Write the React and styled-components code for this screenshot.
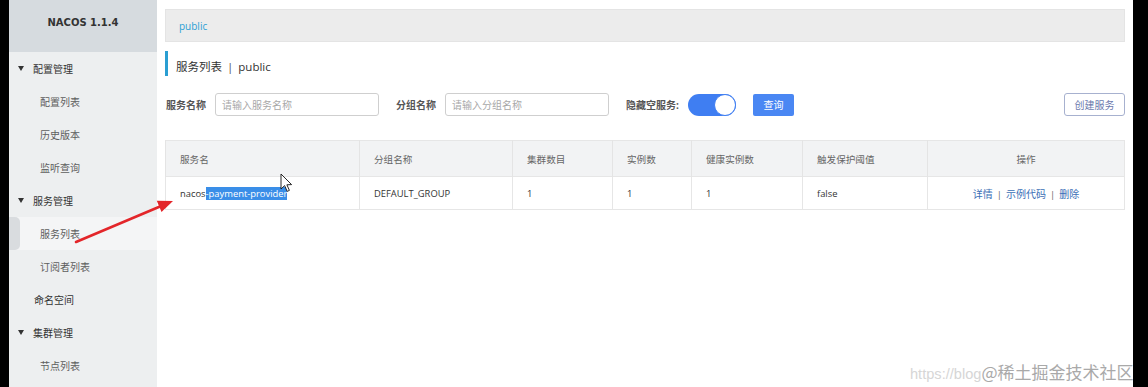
import React from 'react'
import styled, { createGlobalStyle } from 'styled-components'

const GlobalStyle = createGlobalStyle`
  html, body {
    margin: 0;
    padding: 0;
    background: #000;
  }
  body {
    font-family: "Open Sans", "Noto Sans CJK SC", sans-serif;
    font-size: 10px;
    color: #333;
  }
`

const navigation = [
  { id: 'config', name: '配置管理', group: true },
  { id: 'config-list', name: '配置列表' },
  { id: 'history', name: '历史版本' },
  { id: 'listener', name: '监听查询' },
  { id: 'service', name: '服务管理', group: true },
  { id: 'service-list', name: '服务列表', active: true },
  { id: 'subscriber', name: '订阅者列表' },
  { id: 'namespace', name: '命名空间', top: true },
  { id: 'cluster', name: '集群管理', group: true },
  { id: 'nodes', name: '节点列表' },
]

const columns = [
  { title: '服务名', width: 194 },
  { title: '分组名称', width: 153 },
  { title: '集群数目', width: 100 },
  { title: '实例数', width: 79 },
  { title: '健康实例数', width: 111 },
  { title: '触发保护阈值', width: 125 },
  { title: '操作', width: 197, center: true },
]

export default function App() {
  return (
    <>
      <GlobalStyle />
      <Frame>
        <Screen>
          <Sidebar>
            <Brand>NACOS 1.1.4</Brand>
            {navigation.map(({ id, name, group, active, top }) => (
              <NavItem key={id} $group={group} $top={top} $active={active}>
                {group && <Caret />}
                {name}
              </NavItem>
            ))}
          </Sidebar>

          <Main>
            <Breadcrumb>public</Breadcrumb>
            <Title>服务列表 <Sep>|</Sep> public</Title>

            <SearchRow>
              <Label $width={49}>服务名称</Label>
              <Input placeholder="请输入服务名称" />
              <Label $width={49} $gap>分组名称</Label>
              <Input placeholder="请输入分组名称" />
              <Label $width={62} $gap>隐藏空服务:</Label>
              <Switch>
                <Knob />
              </Switch>
              <QueryButton>查询</QueryButton>
              <Spacer />
              <CreateButton>创建服务</CreateButton>
            </SearchRow>

            <Table>
              <colgroup>
                {columns.map(c => <col key={c.title} style={{ width: c.width }} />)}
              </colgroup>
              <thead>
                <tr>
                  {columns.map(c => <Th key={c.title} $center={c.center}>{c.title}</Th>)}
                </tr>
              </thead>
              <tbody>
                <tr>
                  <Td>nacos<Selected>-payment-provider</Selected></Td>
                  <Td>DEFAULT_GROUP</Td>
                  <Td>1</Td>
                  <Td>1</Td>
                  <Td>1</Td>
                  <Td>false</Td>
                  <Td $center>
                    <Action>详情</Action>
                    <Pipe>|</Pipe>
                    <Action>示例代码</Action>
                    <Pipe>|</Pipe>
                    <Action>删除</Action>
                  </Td>
                </tr>
              </tbody>
            </Table>
          </Main>

          <Overlay width="1124" height="387" viewBox="0 0 1124 387">
            <line x1="67" y1="242" x2="151" y2="206.5" stroke="#e3262a" strokeWidth="2.6" strokeLinecap="round" />
            <polygon points="164,201 152.5,212 147.8,200.8" fill="#e3262a" />
            <path
              d="M272 174 L272 189 L275.6 185.6 L278.2 191.4 L280.4 190.4 L277.9 184.8 L282.6 184.6 Z"
              fill="#fff"
              stroke="#111"
              strokeWidth="0.9"
              strokeLinejoin="round"
            />
          </Overlay>

          <Watermark>
            <Faint>https://blog</Faint>@稀土掘金技术社区
          </Watermark>
        </Screen>
      </Frame>
    </>
  )
}

const Frame = styled.div`
  width: 1148px;
  height: 387px;
  background: #000;
  display: flex;
  padding-left: 9px;
  box-sizing: border-box;
  overflow: hidden;
`

const Screen = styled.div`
  position: relative;
  display: flex;
  width: 1124px;
  height: 387px;
  flex: none;
  overflow: hidden;
  background: #fff;
`

const Sidebar = styled.nav`
  width: 148px;
  flex: none;
  background: #edeff0;
  display: flex;
  flex-direction: column;
`

const Brand = styled.div`
  height: 52px;
  background: #d6dbdf;
  display: flex;
  align-items: center;
  justify-content: center;
  padding-bottom: 8px;
  box-sizing: border-box;
  font-family: "DejaVu Sans", sans-serif;
  font-weight: bold;
  font-size: 10px;
  color: #333;
`

const NavItem = styled.div`
  height: 33px;
  display: flex;
  align-items: center;
  box-sizing: border-box;
  padding-left: ${p => (p.$group ? 9 : p.$top ? 25 : p.$active ? 0 : 31)}px;
  font-size: 10px;
  color: ${p => (p.$group || p.$top ? '#333' : '#5e5e5e')};
  background: ${p => (p.$active ? '#f4f5f6' : 'transparent')};

  &::before {
    content: '';
    display: ${p => (p.$active ? 'block' : 'none')};
    width: 11px;
    align-self: stretch;
    margin-right: 20px;
    background: #d9dcdf;
    border-radius: 0 5px 5px 0;
  }
`

const Caret = styled.span`
  width: 0;
  height: 0;
  border-left: 3.5px solid transparent;
  border-right: 3.5px solid transparent;
  border-top: 5px solid #333;
  margin-right: 9px;
`

const Main = styled.main`
  flex: 1;
  display: flex;
  flex-direction: column;
  padding: 9px 9px 0 8px;
  background: #fff;
`

const Breadcrumb = styled.div`
  height: 33px;
  display: flex;
  align-items: center;
  padding-left: 13px;
  background: #ececec;
  border: 1px solid #e4e4e4;
  box-sizing: border-box;
  color: #2ba0d4;
  font-size: 10px;
`

const Title = styled.h1`
  margin: 9px 0 0;
  height: 25px;
  box-sizing: border-box;
  display: flex;
  align-items: flex-end;
  padding-bottom: 1px;
  border-left: 3px solid #2a9ed2;
  padding-left: 8px;
  font-weight: normal;
  font-size: 11.5px;
  line-height: 16px;
  color: #333;
  white-space: pre;
`

const Sep = styled.span`
  color: #555;
  margin: 0 2px;
`

const SearchRow = styled.div`
  margin-top: 17px;
  display: flex;
  align-items: center;
  height: 23px;
  padding-left: 1px;
`

const Label = styled.span`
  flex: none;
  width: ${p => p.$width}px;
  font-weight: bold;
  color: #555;
  font-size: 10px;
  white-space: nowrap;
  margin-left: ${p => (p.$gap ? 17 : 0)}px;
`

const Input = styled.input`
  width: 164px;
  height: 23px;
  box-sizing: border-box;
  border: 1px solid #cfcfcf;
  border-radius: 3px;
  padding: 0 6px;
  font-family: "Open Sans", "Noto Sans CJK SC", sans-serif;
  font-size: 10px;
  outline: none;

  &::placeholder {
    color: #a8a8a8;
  }
`

const Switch = styled.div`
  width: 48px;
  height: 22px;
  border-radius: 11px;
  background: #3f7ef2;
  display: flex;
  justify-content: flex-end;
  align-items: center;
`

const Knob = styled.div`
  width: 20px;
  height: 20px;
  border-radius: 50%;
  background: #fff;
  border: 1px solid #3f7ef2;
`

const QueryButton = styled.button`
  margin-left: 17px;
  width: 41px;
  height: 22px;
  border: none;
  border-radius: 2px;
  background: #4a87f3;
  color: #fff;
  font-family: "Open Sans", "Noto Sans CJK SC", sans-serif;
  font-size: 10px;
  padding: 0;
`

const Spacer = styled.div`
  flex: 1;
`

const CreateButton = styled.button`
  width: 61px;
  height: 23px;
  border: 1px solid #a7b1cf;
  border-radius: 3px;
  background: #fff;
  color: #6a79ad;
  font-family: "Open Sans", "Noto Sans CJK SC", sans-serif;
  font-size: 10px;
  padding: 0;
`

const Table = styled.table`
  margin-top: 24px;
  width: 959px;
  table-layout: fixed;
  border-collapse: collapse;
  border: 1px solid #e6e6e6;
`

const Th = styled.th`
  height: 35px;
  background: #f2f3f4;
  border-left: 1px solid #e4e4e4;
  text-align: ${p => (p.$center ? 'center' : 'left')};
  padding: 0 14px;
  font-weight: normal;
  font-size: 9.6px;
  color: #666;
`

const Td = styled.td`
  height: 32px;
  border-left: 1px solid #e6e6e6;
  border-top: 1px solid #e6e6e6;
  text-align: ${p => (p.$center ? 'center' : 'left')};
  padding: 0 14px;
  font-size: 9.4px;
  color: #333;
  white-space: nowrap;
`

const Selected = styled.span`
  background: #3a8ee8;
  color: #fff;
`

const Action = styled.a`
  color: #3b6fb6;
  font-size: 10px;
`

const Pipe = styled.span`
  color: #666;
  margin: 0 4px;
`

const Overlay = styled.svg`
  position: absolute;
  left: 0;
  top: 0;
  pointer-events: none;
`

const Watermark = styled.div`
  position: absolute;
  left: 901px;
  top: 360px;
  white-space: nowrap;
  font-family: "Noto Sans CJK SC", sans-serif;
  font-size: 17px;
  line-height: 24px;
  color: #a9a9a9;
`

const Faint = styled.span`
  font-family: "Liberation Sans", sans-serif;
  font-size: 14.6px;
  color: #d6d6d6;
`
